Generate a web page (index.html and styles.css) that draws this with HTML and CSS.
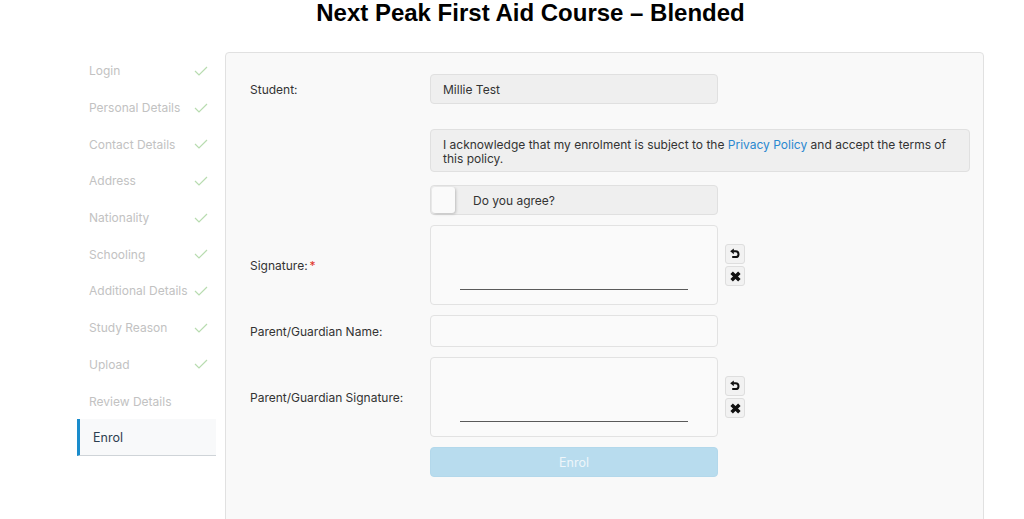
FILE: index.html
```html
<!DOCTYPE html>
<html lang="en">
<head>
<meta charset="utf-8">
<title>Next Peak First Aid Course – Blended</title>
<link rel="stylesheet" href="styles.css">
</head>
<body>
<div class="page">
  <h1 class="title">Next Peak First Aid Course – Blended</h1>
  <div class="layout">
    <nav class="steps">
      <div class="step done"><span>Login</span><svg class="check" viewBox="0 0 14 10"><polyline points="1,5 5,9 13,1"/></svg></div>
      <div class="step done"><span>Personal Details</span><svg class="check" viewBox="0 0 14 10"><polyline points="1,5 5,9 13,1"/></svg></div>
      <div class="step done"><span>Contact Details</span><svg class="check" viewBox="0 0 14 10"><polyline points="1,5 5,9 13,1"/></svg></div>
      <div class="step done"><span>Address</span><svg class="check" viewBox="0 0 14 10"><polyline points="1,5 5,9 13,1"/></svg></div>
      <div class="step done"><span>Nationality</span><svg class="check" viewBox="0 0 14 10"><polyline points="1,5 5,9 13,1"/></svg></div>
      <div class="step done"><span>Schooling</span><svg class="check" viewBox="0 0 14 10"><polyline points="1,5 5,9 13,1"/></svg></div>
      <div class="step done"><span>Additional Details</span><svg class="check" viewBox="0 0 14 10"><polyline points="1,5 5,9 13,1"/></svg></div>
      <div class="step done"><span>Study Reason</span><svg class="check" viewBox="0 0 14 10"><polyline points="1,5 5,9 13,1"/></svg></div>
      <div class="step done"><span>Upload</span><svg class="check" viewBox="0 0 14 10"><polyline points="1,5 5,9 13,1"/></svg></div>
      <div class="step"><span>Review Details</span></div>
      <div class="step active"><span>Enrol</span></div>
    </nav>
    <main class="panel">
      <div class="row row-student">
        <label class="label">Student:</label>
        <div class="input readonly">Millie Test</div>
      </div>
      <div class="row row-ack">
        <div class="label"></div>
        <div class="ack">I acknowledge that my enrolment is subject to the <a href="#" class="link">Privacy Policy</a> and accept the terms of this policy.</div>
      </div>
      <div class="row row-agree">
        <div class="label"></div>
        <div class="toggle"><span class="knob"></span><span class="toggle-text">Do you agree?</span></div>
      </div>
      <div class="row row-sig">
        <label class="label">Signature:<span class="req">*</span></label>
        <div class="sig"><div class="sig-line"></div></div>
        <div class="sig-tools">
          <button class="tool" type="button"><svg class="undo" viewBox="0 0 10 12"><path d="M3.2 3.3 H5.6 A2.9 2.9 0 0 1 5.6 9.1 H2.2" /><polygon points="0.2,3.3 3.8,0.4 3.8,6.2"/></svg></button>
          <button class="tool" type="button"><svg class="times" viewBox="0 0 10 10"><path d="M1.5 1.5 L8.5 8.5 M8.5 1.5 L1.5 8.5"/></svg></button>
        </div>
      </div>
      <div class="row row-name">
        <label class="label">Parent/Guardian Name:</label>
        <div class="input"></div>
      </div>
      <div class="row row-sig">
        <label class="label">Parent/Guardian Signature:</label>
        <div class="sig"><div class="sig-line"></div></div>
        <div class="sig-tools">
          <button class="tool" type="button"><svg class="undo" viewBox="0 0 10 12"><path d="M3.2 3.3 H5.6 A2.9 2.9 0 0 1 5.6 9.1 H2.2" /><polygon points="0.2,3.3 3.8,0.4 3.8,6.2"/></svg></button>
          <button class="tool" type="button"><svg class="times" viewBox="0 0 10 10"><path d="M1.5 1.5 L8.5 8.5 M8.5 1.5 L1.5 8.5"/></svg></button>
        </div>
      </div>
      <div class="row row-submit">
        <div class="label"></div>
        <button class="submit" type="button" disabled>Enrol</button>
      </div>
    </main>
  </div>
</div>
</body>
</html>
```
FILE: styles.css
```css
* { box-sizing: border-box; }
html, body { margin: 0; padding: 0; background: #fff; }
body {
  font-family: Inter, "Noto Sans", "Liberation Sans", sans-serif;
  font-size: 12px;
  color: #333;
  overflow: hidden;
}
.page { padding: 0 40px 0 77px; }
.title {
  margin: 0;
  font-family: "Liberation Sans", Arial, sans-serif;
  font-size: 24px;
  font-weight: bold;
  line-height: 26px;
  text-align: center;
  color: #000;
}
.layout {
  display: flex;
  gap: 9px;
  margin-top: 26px;
  align-items: flex-start;
}
.steps { width: 139px; flex: none; }
.step {
  height: 36.7px;
  display: flex;
  align-items: center;
  justify-content: space-between;
  padding: 1px 8px 0 12px;
  color: #c2c2c2;
  white-space: nowrap;
}
.check { width: 14px; height: 10px; flex: none; }
.check polyline { fill: none; stroke: #b8dcb0; stroke-width: 1.2; }
.step.active {
  background: #f8f9fa;
  border-left: 3px solid #1a8ccc;
  border-bottom: 1px solid #cfd4d8;
  padding-left: 13px;
  color: #2c3e50;
  font-size: 12.5px;
}
.panel {
  flex: 1;
  min-width: 0;
  height: 520px;
  background: #f9f9f9;
  border: 1px solid #e1e1e1;
  border-radius: 4px;
  padding: 21px 13px 0 24px;
}
.row { display: flex; align-items: center; }
.label { width: 180px; flex: none; }
.req { color: #e0342a; margin-left: 2px; }
.row-student { margin-bottom: 25px; }
.row-ack { margin-bottom: 13px; }
.row-agree, .row-sig, .row-name { margin-bottom: 10px; }
.input {
  width: 288px;
  height: 32px;
  border: 1px solid #e2e2e2;
  border-radius: 4px;
  background: #fafafa;
  padding: 0 12px;
  display: flex;
  align-items: center;
}
.input.readonly { background: #efefef; height: 30px; border-color: #e0e0e0; }
.ack {
  width: 540px;
  height: 43px;
  background: #efefef;
  border: 1px solid #e0e0e0;
  border-radius: 4px;
  padding: 8px 12px 0;
  line-height: 14px;
}
.link { color: #2a88d0; text-decoration: none; }
.toggle {
  width: 288px;
  height: 30px;
  background: #efefef;
  border: 1px solid #e0e0e0;
  border-radius: 4px;
  display: flex;
  align-items: center;
}
.knob {
  width: 23px;
  height: 26px;
  margin-left: 1px;
  background: #fafafa;
  border-radius: 3px;
  box-shadow: 1px 1px 3px rgba(0,0,0,0.22);
}
.toggle-text { margin-left: 18px; }
.sig {
  width: 288px;
  height: 80px;
  background: #fafafa;
  border: 1px solid #e2e2e2;
  border-radius: 4px;
  display: flex;
  align-items: flex-end;
  justify-content: center;
  padding-bottom: 14px;
}
.sig-line { width: 228px; height: 1.5px; background: #5a5a5a; }
.sig-tools {
  display: flex;
  flex-direction: column;
  gap: 2px;
  margin-left: 7px;
}
.tool {
  width: 20px;
  height: 20px;
  padding: 0;
  margin: 0;
  background: #f2f2f2;
  border: 1px solid #dedede;
  border-radius: 3px;
  display: flex;
  align-items: center;
  justify-content: center;
}
.tool svg.undo { width: 10px; height: 12px; }
.tool svg.times { width: 11px; height: 11px; }
.undo path { fill: none; stroke: #111; stroke-width: 2; }
.undo polygon { fill: #111; }
.times path { fill: none; stroke: #111; stroke-width: 3.2; }
.submit {
  width: 288px;
  height: 30px;
  background: #b8dcee;
  border: 1px solid #b3d8eb;
  border-radius: 4px;
  color: #eef6fa;
  font: inherit;
  font-size: 12.5px;
}
```
